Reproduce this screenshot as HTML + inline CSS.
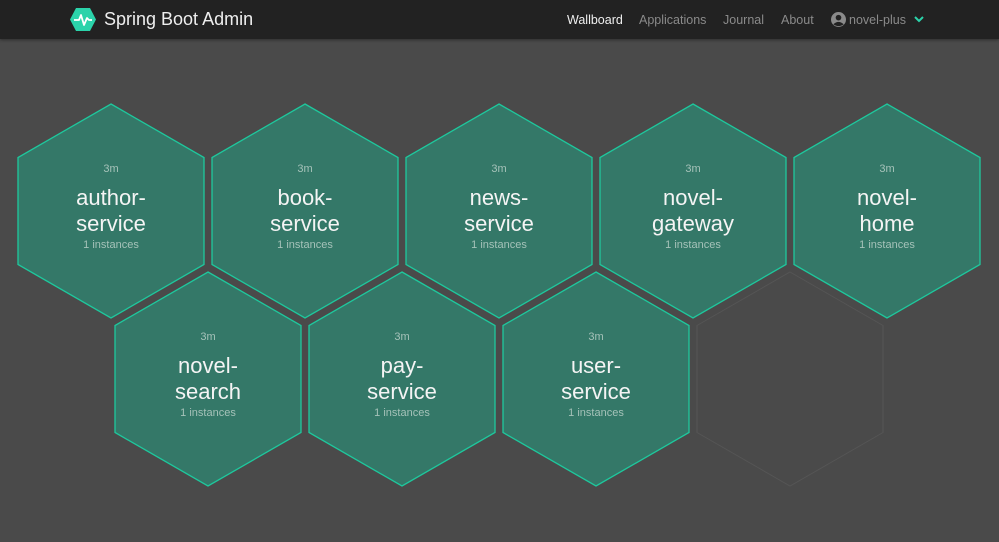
<!DOCTYPE html>
<html><head><style>
*{margin:0;padding:0;box-sizing:border-box}
body{width:999px;height:542px;background:#4a4a4a;font-family:"Liberation Sans",sans-serif;overflow:hidden;position:relative}
.hdr{position:absolute;left:0;top:0;width:999px;height:39px;background:#222;box-shadow:0 1px 3px rgba(0,0,0,.4)}
.brand{position:absolute;left:104px;top:9px;color:#eee;font-size:18px}
.nav{position:absolute;top:13px;font-size:12.5px;color:#8a8a8a}
.t{position:absolute;width:186px;text-align:center;color:#fff}
.t .a{font-size:11px;color:#a5c2b9;height:14px}
.t .n{font-size:22px;line-height:26px;margin-top:8px;color:#f4f4f4}
.t .i{font-size:11px;color:#a5c2b9;margin-top:2px}
</style></head><body>
<div class="hdr">
<svg style="position:absolute;left:70px;top:8px" width="26" height="23" viewBox="0 0 26 23"><polygon points="6,0 20,0 26,11.5 20,23 6,23 0,11.5" fill="#2bd3aa"/><polyline points="4,12 9,12 11,7 14,17 17,10 19,12 22,12" fill="none" stroke="#fff" stroke-width="1.8" stroke-linejoin="round"/></svg>
<div class="brand">Spring Boot Admin</div>
<div class="nav" style="left:567px;color:#eee">Wallboard</div>
<div class="nav" style="left:639px">Applications</div>
<div class="nav" style="left:723px">Journal</div>
<div class="nav" style="left:781px">About</div>
<svg style="position:absolute;left:831px;top:12px" width="15" height="15" viewBox="0 0 16 16"><circle cx="8" cy="8" r="8" fill="#8a8a8a"/><circle cx="8" cy="6" r="3" fill="#222"/><path d="M2.5 13 Q8 8 13.5 13 Q8 17 2.5 13Z" fill="#222"/></svg>
<div class="nav" style="left:849px">novel-plus</div>
<svg style="position:absolute;left:914px;top:16px" width="10" height="7" viewBox="0 0 10 7"><polyline points="1,1 5,5 9,1" fill="none" stroke="#2bd3aa" stroke-width="2"/></svg>
</div>
<svg style="position:absolute;left:0;top:0" width="999" height="542">
<defs><polygon id="h" points="0,-107 93,-53.5 93,53.5 0,107 -93,53.5 -93,-53.5"/></defs>
<g fill="#347868" stroke="#1ec89d" stroke-width="1.3">
<use href="#h" x="111" y="211"/><use href="#h" x="305" y="211"/><use href="#h" x="499" y="211"/><use href="#h" x="693" y="211"/><use href="#h" x="887" y="211"/>
<use href="#h" x="208" y="379"/><use href="#h" x="402" y="379"/><use href="#h" x="596" y="379"/>
</g>
<use href="#h" x="790" y="379" fill="none" stroke="#555" stroke-width="1"/>
</svg>
<div class="t" style="left:18px;top:163px"><div class="a">3m</div><div class="n">author-<br>service</div><div class="i">1 instances</div></div>
<div class="t" style="left:212px;top:163px"><div class="a">3m</div><div class="n">book-<br>service</div><div class="i">1 instances</div></div>
<div class="t" style="left:406px;top:163px"><div class="a">3m</div><div class="n">news-<br>service</div><div class="i">1 instances</div></div>
<div class="t" style="left:600px;top:163px"><div class="a">3m</div><div class="n">novel-<br>gateway</div><div class="i">1 instances</div></div>
<div class="t" style="left:794px;top:163px"><div class="a">3m</div><div class="n">novel-<br>home</div><div class="i">1 instances</div></div>
<div class="t" style="left:115px;top:331px"><div class="a">3m</div><div class="n">novel-<br>search</div><div class="i">1 instances</div></div>
<div class="t" style="left:309px;top:331px"><div class="a">3m</div><div class="n">pay-<br>service</div><div class="i">1 instances</div></div>
<div class="t" style="left:503px;top:331px"><div class="a">3m</div><div class="n">user-<br>service</div><div class="i">1 instances</div></div>
</body></html>
